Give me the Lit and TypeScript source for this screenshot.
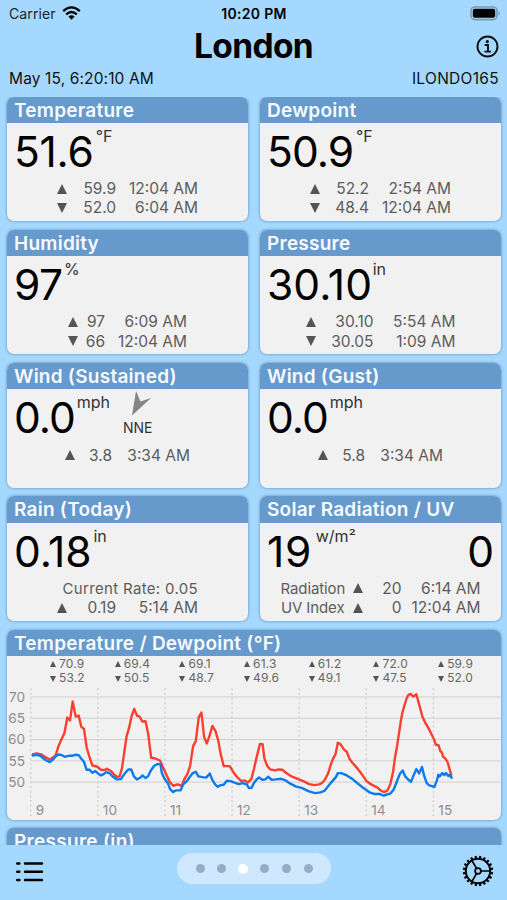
import { LitElement, html, svg, css, nothing } from "lit";
import { customElement, property } from "lit/decorators.js";

interface Stat { label?: string; dir: "up" | "down"; value: string; time: string; }
interface Reading {
  title: string; value: string; unit: string; tracking: number; gap: number; cols: string;
  stats: Stat[]; wind?: string; second?: string; note?: string;
}

const READINGS: Reading[] = [
  { title: "Temperature", value: "51.6", unit: "°F", tracking: -.3, gap: 2.2, cols: "10px 49px 82px",
    stats: [{ dir: "up", value: "59.9", time: "12:04 AM" }, { dir: "down", value: "52.0", time: "6:04 AM" }] },
  { title: "Dewpoint", value: "50.9", unit: "°F", tracking: -.9, gap: 2.6, cols: "10px 49px 82px",
    stats: [{ dir: "up", value: "52.2", time: "2:54 AM" }, { dir: "down", value: "48.4", time: "12:04 AM" }] },
  { title: "Humidity", value: "97", unit: "%", tracking: -.5, gap: 1.5, cols: "10px 27px 82px",
    stats: [{ dir: "up", value: "97", time: "6:09 AM" }, { dir: "down", value: "66", time: "12:04 AM" }] },
  { title: "Pressure", value: "30.10", unit: "in", tracking: .1, gap: .5, cols: "10px 58px 82px",
    stats: [{ dir: "up", value: "30.10", time: "5:54 AM" }, { dir: "down", value: "30.05", time: "1:09 AM" }] },
  { title: "Wind (Sustained)", value: "0.0", unit: "mph", tracking: -1, gap: 2, cols: "10px 37px 78px", wind: "NNE",
    stats: [{ dir: "up", value: "3.8", time: "3:34 AM" }] },
  { title: "Wind (Gust)", value: "0.0", unit: "mph", tracking: -1, gap: 2, cols: "10px 37px 78px",
    stats: [{ dir: "up", value: "5.8", time: "3:34 AM" }] },
  { title: "Rain (Today)", value: "0.18", unit: "in", tracking: -.1, gap: 2, cols: "10px 49px 82px", note: "Current Rate: 0.05",
    stats: [{ dir: "up", value: "0.19", time: "5:14 AM" }] },
  { title: "Solar Radiation / UV", value: "19", unit: "w/m²", tracking: .8, gap: 3.5, cols: "64px 8px 10px 39px 79px", second: "0",
    stats: [{ label: "Radiation", dir: "up", value: "20", time: "6:14 AM" },
            { label: "UV Index", dir: "up", value: "0", time: "12:04 AM" }] },
];

const DAILY: [string, string][] = [
  ["70.9", "53.2"], ["69.4", "50.5"], ["69.1", "48.7"], ["61.3", "49.6"],
  ["61.2", "49.1"], ["72.0", "47.5"], ["59.9", "52.0"],
];

// Chart units are thirds of a pixel, measured from the top left of the chart frame.
const TEMPERATURE =
  "98,403 108,401 120,403 135,412 148,419 158,413 166,406 174,380 182,361 192,340 201,293 209,302 217,245 226,290 235,287 243,321 251,327 259,383 268,413 276,437 290,440 302,450 312,451 320,447 334,455 342,465 350,471 358,470 365,446 372,398 379,350 387,322 394,289 402,267 410,287 418,290 427,305 436,304 444,342 453,414 466,416 480,423 488,442 500,468 510,488 519,498 532,494 545,498 553,477 562,462 570,438 579,379 587,364 596,292 604,278 612,351 620,371 628,349 637,318 646,333 654,360 662,403 671,439 689,439 700,457 712,473 724,484 734,482 744,488 754,478 762,447 770,412 780,372 788,373 793,415 801,437 811,449 826,452 836,449 847,450 858,459 875,470 895,478 912,485 928,493 943,496 958,494 967,489 975,480 985,460 994,431 999,418 1007,403 1014,369 1022,373 1032,389 1041,396 1049,417 1057,428 1067,439 1080,455 1090,469 1100,484 1114,494 1132,503 1144,513 1153,517 1163,512 1172,493 1180,456 1186,412 1192,379 1197,346 1203,306 1208,278 1214,257 1221,235 1226,225 1233,222 1241,230 1250,223 1256,245 1262,267 1268,290 1277,309 1286,324 1294,340 1303,358 1308,374 1317,377 1322,394 1327,398 1330,410 1338,417 1344,427 1350,449 1355,465";
const DEWPOINT =
  "97,407 108,405 120,408 134,420 148,427 158,419 166,409 175,404 185,406 193,411 204,408 215,408 224,405 235,406 243,417 251,426 259,450 268,450 276,459 285,454 293,461 302,467 310,463 318,457 329,461 337,470 350,479 362,478 368,469 376,458 384,449 393,449 401,470 410,479 420,474 427,467 436,475 444,469 452,452 462,438 472,433 481,433 485,460 493,477 503,490 510,508 519,517 527,512 541,512 549,494 561,483 570,470 578,460 587,456 595,470 607,472 619,473 629,461 636,479 645,494 653,501 662,496 671,495 680,483 692,484 702,488 716,493 728,490 740,494 747,505 755,504 762,489 770,479 777,473 787,480 796,479 805,471 815,480 827,479 844,477 855,481 870,491 887,500 907,505 927,515 946,520 962,518 974,513 983,502 995,487 1008,472 1014,460 1024,460 1041,467 1058,478 1075,492 1091,505 1108,517 1125,523 1141,523 1152,528 1162,524 1171,522 1182,509 1190,489 1200,463 1209,452 1216,469 1226,480 1234,486 1242,466 1250,448 1258,461 1267,442 1274,470 1281,490 1289,497 1297,499 1304,502 1312,481 1316,465 1320,470 1328,460 1334,466 1339,460 1346,469 1350,465 1356,474";

@customElement("trend-mark")
class TrendMark extends LitElement {
  @property() dir: "up" | "down" = "up";
  static styles = css`
    :host { display: inline-block; width: 10px; height: 10px; }
    svg { display: block; width: 100%; height: 100%; }
  `;
  render() {
    return html`<svg viewBox="0 0 10 10"><path fill="#555" d=${this.dir === "up" ? "M5 0L10 10H0Z" : "M0 0H10L5 10Z"}></path></svg>`;
  }
}

@customElement("reading-card")
class ReadingCard extends LitElement {
  @property({ attribute: false }) data!: Reading;
  static styles = css`
    :host { display: flex; flex-direction: column; height: 124.7px; border-radius: 7px; overflow: hidden;
      background: #f1f1f1; box-shadow: 0 0 3px rgba(30, 60, 90, .55); }
    .title { height: 26.2px; line-height: 27px; padding-left: 7px; background: #6699cc; color: #f6f9fd;
      font-size: 19px; font-weight: 600; letter-spacing: .25px; white-space: nowrap; flex: none; }
    .main { display: flex; height: 51px; padding: 0 7px 0 7px; align-items: flex-start; }
    .value { font-size: 42.5px; line-height: 58px; color: #000; }
    .unit { font-size: 16px; line-height: 27px; color: #333; }
    .second { margin-left: auto; }
    .wind { display: flex; flex-direction: column; align-items: center; margin: 2px 0 0 13px; font-size: 14px;
      line-height: 17px; color: #333; gap: 2px; }
    .wind svg { width: 22px; height: 26px; margin-left: 7px; }
    .stats { display: flex; flex-direction: column; align-items: center; margin-top: 5.3px; color: #5c5c5c;
      font-size: 15.5px; line-height: 19.3px; }
    .row { display: grid; text-align: right; align-items: center; white-space: nowrap; }
    .note, .label { font-size: 15px; }
    .note { letter-spacing: .33px; align-self: flex-end; }
    .label { letter-spacing: -.1px; }
  `;
  render() {
    const d = this.data;
    return html`
      <div class="title">${d.title}</div>
      <div class="main">
        <span class="value" style="letter-spacing:${d.tracking}px">${d.value}</span>
        <span class="unit" style="margin-left:${d.gap}px">${d.unit}</span>
        ${d.wind ? html`<div class="wind">
          <svg viewBox="0 0 22 26"><path fill="#858585" d="M6 0L10.5 10.5L21 7L2 24.5Z"></path></svg>
          <span>${d.wind}</span></div>` : nothing}
        ${d.second ? html`<span class="value second">${d.second}</span>` : nothing}
      </div>
      <div class="stats">
        <div class="stack">
        ${d.note ? html`<div class="row note">${d.note}</div>` : nothing}
        ${d.stats.map((s) => html`<div class="row" style="grid-template-columns:${d.cols}">
          ${s.label ? html`<span class="label">${s.label}</span><span></span>` : nothing}
          <trend-mark dir=${s.dir}></trend-mark><span>${s.value}</span><span>${s.time}</span></div>`)}
        </div>
      </div>`;
  }
}

@customElement("history-card")
class HistoryCard extends LitElement {
  static styles = css`
    :host { display: block; position: relative; height: 190px; border-radius: 7px; overflow: hidden;
      background: #f1f1f1; box-shadow: 0 0 3px rgba(30, 60, 90, .55); }
    .title { height: 26.3px; line-height: 28px; padding-left: 7px; background: #6699cc; color: #f6f9fd;
      font-size: 19px; font-weight: 600; letter-spacing: .26px; }
    .days { position: absolute; top: 27px; left: 43px; display: grid; grid-template-columns: repeat(7, 64.7px); }
    .day { display: grid; grid-template-columns: 6px auto; column-gap: 3px; justify-content: start; align-items: center;
      font-size: 12px; line-height: 14.7px; letter-spacing: .15px; color: #666; }
    .day trend-mark { width: 6px; height: 6px; }
    .plot { display: block; width: 494px; height: 163.7px; }
    .axis { font-size: 41px; fill: #8e8e8e; }
    .grid { stroke: #d0d0d0; stroke-width: 3; }
    .tick { stroke: #cfcfcf; stroke-width: 4; stroke-dasharray: 6 8; }
    .line { fill: none; stroke-width: 7.2; stroke-linejoin: round; stroke-linecap: round; }
    .temp { stroke: #f9402f; }
    .dew { stroke: #0a7aef; }
  `;
  render() {
    return html`
      <div class="title">Temperature / Dewpoint (°F)</div>
      <svg class="plot" viewBox="21 108 1482 492">
        ${[70, 65, 60, 55, 50].map((v, i) => svg`
          <line class="grid" x1="90" x2="1503" y1=${231 + i * 64} y2=${231 + i * 64}></line>
          <text class="axis" x="74" y=${246 + i * 64} text-anchor="end">${v}</text>`)}
        ${[9, 10, 11, 12, 13, 14, 15].map((v, i) => svg`
          <line class="tick" x1=${91 + i * 201.7} x2=${91 + i * 201.7} y1="205" y2="596"></line>
          <text class="axis" x=${106 + i * 201.7} y="587">${v}</text>`)}
        <polyline class="line temp" points=${TEMPERATURE}></polyline>
        <polyline class="line dew" points=${DEWPOINT}></polyline>
      </svg>
      <div class="days">
        ${DAILY.map(([hi, lo]) => html`<div class="day">
          <trend-mark dir="up"></trend-mark><span>${hi}</span>
          <trend-mark dir="down"></trend-mark><span>${lo}</span></div>`)}
      </div>`;
  }
}

@customElement("app-root")
class AppRoot extends LitElement {
  static styles = css`
    :host { display: flex; flex-direction: column; width: 507px; height: 900px; background: #a5d8ff; overflow: hidden;
      font-family: Inter, "Liberation Sans", sans-serif; color: #000; }
    .status { display: grid; grid-template-columns: 1fr auto 1fr; align-items: center; height: 28px; padding: 0 6px 2px 9px;
      font-size: 14px; box-sizing: border-box; flex: none; }
    .carrier { display: flex; align-items: center; gap: 6px; color: #1b242c; letter-spacing: .1px; }
    .clock { font-weight: 600; letter-spacing: .3px; margin-right: 2px; }
    .battery { justify-self: end; display: block; }
    .heading { display: grid; grid-template-columns: 1fr auto 1fr; align-items: center; height: 38px; padding: 0 8px; flex: none; }
    .heading h1 { grid-column: 2; margin: 0; font-size: 33.5px; line-height: 37px; padding-bottom: 1px; font-weight: 700; letter-spacing: -.65px; }
    .heading svg { justify-self: end; margin-bottom: 2px; }
    .meta { display: flex; justify-content: space-between; height: 30.5px; line-height: 25px; padding: 0 8px 0 9px;
      box-sizing: border-box; font-size: 15.5px; color: #111; letter-spacing: .13px; flex: none; }
    .meta .station { letter-spacing: .3px; }
    .scroll { flex: 1; min-height: 0; overflow: hidden; padding: 0 6px 0 7px; }
    .cards { display: grid; grid-template-columns: 241px 241px; column-gap: 12px; row-gap: 8.6px; margin-bottom: 8.6px; }
    .next { margin-top: 8.5px; height: 60px; line-height: 28px; padding-left: 7px; background: #6699cc; color: #f6f9fd;
      border-radius: 7px; font-size: 19px; font-weight: 600; letter-spacing: .3px; box-shadow: 0 0 3px rgba(30, 60, 90, .55); }
    .bar { display: grid; grid-template-columns: 1fr auto 1fr; height: 55px; padding: 8px 13px 0 15px; box-sizing: border-box;
      align-items: start; flex: none; }
    .bar .list { margin-top: 8px; }
    .bar .gear { justify-self: end; margin-top: 2px; }
    .pager { display: flex; align-items: center; justify-content: center; gap: 12.6px; width: 154px; height: 31px;
      border-radius: 16px; background: #cfe8fd; margin-right: 2px; padding-left: 1.4px; box-sizing: border-box; }
    .dot { width: 9px; height: 9px; border-radius: 50%; background: #93aec5; }
    .dot.on { width: 10px; height: 10px; margin: 0 -.5px; background: #fff; }
  `;
  render() {
    const teeth = Array.from({ length: 20 }, (_, i) => i * 18 + 9);
    return html`
      <div class="status">
        <div class="carrier"><span>Carrier</span>
          <svg width="19" height="14" viewBox="0 0 19 14" fill="none" stroke="#000" stroke-width="2.3">
            <path d="M1.2 5.2Q9.5 -2.4 17.8 5.2"></path><path d="M4.2 8.4Q9.5 3.6 14.8 8.4"></path>
            <path fill="#000" stroke="none" d="M6.4 10.6Q9.5 8 12.6 10.6L9.5 13.8Z"></path>
          </svg></div>
        <div class="clock">10:20 PM</div>
        <svg class="battery" width="31" height="15" viewBox="0 0 31 15">
          <rect x="1" y="1" width="26" height="12.6" rx="4" fill="#a5d8ff" stroke="#7899b0" stroke-width="1.6"></rect>
          <rect x="2.8" y="2.8" width="22.4" height="9" rx="2" fill="#000"></rect>
          <path d="M28.6 5Q31.2 7.3 28.6 9.7Z" fill="#7899b0"></path>
        </svg>
      </div>
      <div class="heading">
        <h1>London</h1>
        <svg width="23" height="23" viewBox="0 0 23 23" fill="none" stroke="#0b1116" stroke-width="1.9">
          <circle cx="11.5" cy="11.5" r="10"></circle>
          <circle cx="11.3" cy="6.6" r="1.6" fill="#0b1116" stroke="none"></circle>
          <path d="M8.7 10H12V16.4M8.5 16.6H15"></path>
        </svg>
      </div>
      <div class="meta"><span>May 15, 6:20:10 AM</span><span class="station">ILONDO165</span></div>
      <div class="scroll">
        <div class="cards">${READINGS.map((r) => html`<reading-card .data=${r}></reading-card>`)}</div>
        <history-card></history-card>
        <div class="next">Pressure (in)</div>
      </div>
      <div class="bar">
        <svg class="list" width="29" height="22" viewBox="0 0 29 22" stroke="#000" stroke-width="2.4" stroke-linecap="round">
          <path d="M2.2 2.5H4.4M10 2.5H27M2.2 10.8H4.4M10 10.8H27M2.2 19H4.4M10 19H27"></path>
        </svg>
        <div class="pager">${[0, 1, 2, 3, 4, 5].map((i) => html`<span class="dot ${i === 2 ? "on" : ""}"></span>`)}</div>
        <svg class="gear" width="32" height="32" viewBox="-16 -16 32 32" fill="none" stroke="#000" stroke-width="2">
          <circle r="12.2"></circle><circle r="2.9" stroke-width="1.7"></circle>
          <path stroke-width="1.7" d="M3 0H12M-1.5 -2.6L-6 -10.4M-1.5 2.6L-6 10.4"></path>
          ${teeth.map((a) => svg`<path stroke-width="2.2" d="M12.6 0H15.2" transform="rotate(${a})"></path>`)}
        </svg>
      </div>`;
  }
}
